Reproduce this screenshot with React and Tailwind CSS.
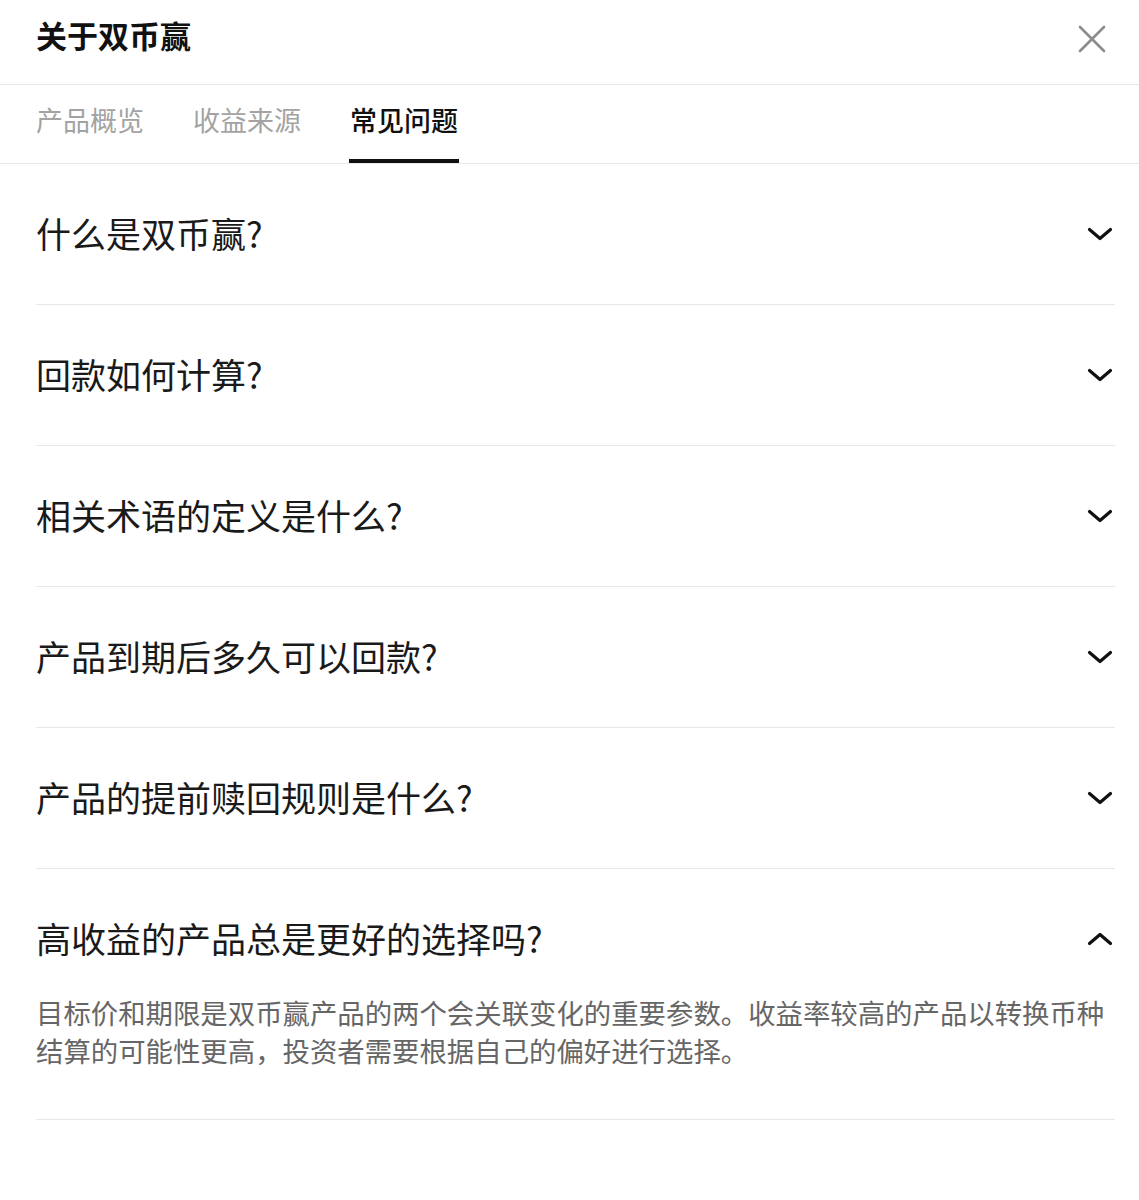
import { useState } from "react";

const TABS = ["产品概览", "收益来源", "常见问题"];

const FAQS = [
  { q: "什么是双币赢?" },
  { q: "回款如何计算?" },
  { q: "相关术语的定义是什么?" },
  { q: "产品到期后多久可以回款?" },
  { q: "产品的提前赎回规则是什么?" },
  {
    q: "高收益的产品总是更好的选择吗?",
    a: "目标价和期限是双币赢产品的两个会关联变化的重要参数。收益率较高的产品以转换币种结算的可能性更高，投资者需要根据自己的偏好进行选择。",
  },
];

function Chevron({ up }) {
  return (
    <svg width="26" height="14" viewBox="0 0 26 14" fill="none">
      <polyline
        points={up ? "2.5,11.5 13,2.5 23.5,11.5" : "2.5,2.5 13,11.5 23.5,2.5"}
        stroke="#111"
        strokeWidth="3.2"
        strokeLinecap="round"
        strokeLinejoin="round"
      />
    </svg>
  );
}

export default function App() {
  const [tab, setTab] = useState(2);
  const [open, setOpen] = useState(5);

  return (
    <div
      className="w-[1139px] min-h-[1200px] bg-white"
      style={{ fontFamily: '"Noto Sans CJK SC", "Noto Sans", sans-serif' }}
    >
      {/* header */}
      <div className="h-[85px] flex items-center justify-between pl-9 pr-[28px] border-b border-[#e8e8e8]">
        <h1 className="text-[31px] font-bold text-[#111] leading-none -mt-[16px]">
          关于双币赢
        </h1>
        <button className="-mt-[6px] p-1">
          <svg width="30" height="30" viewBox="0 0 30 30" fill="none">
            <path
              d="M3 3 L27 27 M27 3 L3 27"
              stroke="#8c8c8c"
              strokeWidth="2.6"
              strokeLinecap="round"
            />
          </svg>
        </button>
      </div>

      {/* tabs */}
      <div className="h-[79px] flex gap-[49px] pl-9 border-b border-[#e8e8e8]">
        {TABS.map((t, i) => (
          <button
            key={t}
            onClick={() => setTab(i)}
            className={`relative flex items-center h-full text-[27px] leading-none -mt-[5px] ${
              tab === i ? "text-[#111] font-medium" : "text-[#a3a3a3]"
            }`}
          >
            {t}
            {tab === i && (
              <span className="absolute left-[-1px] right-[-1px] bottom-[-5px] h-[4px] bg-[#111]" />
            )}
          </button>
        ))}
      </div>

      {/* faq */}
      <div className="pl-9 pr-[24px]">
        {FAQS.map((f, i) => (
          <div key={f.q} className="border-b border-[#e8e8e8]">
            <button
              onClick={() => setOpen(open === i ? -1 : i)}
              className="w-full h-[140px] flex items-center justify-between text-left"
            >
              <span className="text-[35px] text-[#1a1a1a] leading-none -mt-[3px]">{f.q}</span>
              <span className="mr-[2px]">
                <Chevron up={open === i} />
              </span>
            </button>
            {open === i && f.a && (
              <p className="-mt-[16px] pb-[50px] text-[27.4px] leading-[38px] text-[#666]">
                {f.a}
              </p>
            )}
          </div>
        ))}
      </div>
    </div>
  );
}
